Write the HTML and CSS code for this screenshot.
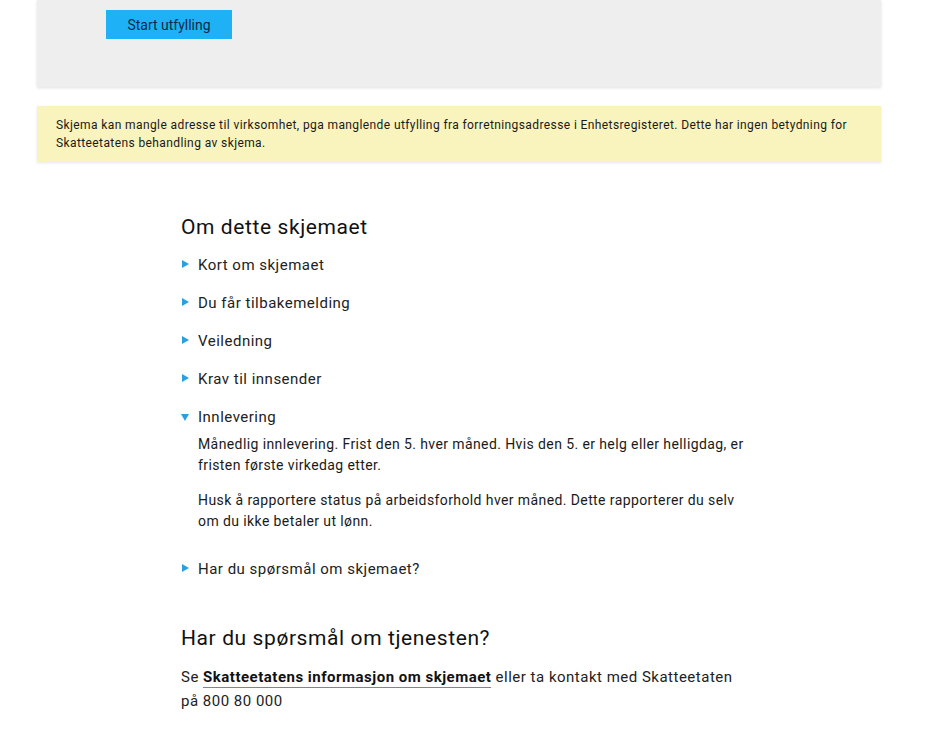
FILE: index.html
```html
<!DOCTYPE html>
<html lang="no">
<head>
<meta charset="utf-8">
<link rel="stylesheet" href="styles.css">
</head>
<body>
<div class="page">
  <div class="start-box">
    <button class="btn-start">Start utfylling</button>
  </div>
  <div class="notice">
    Skjema kan mangle adresse til virksomhet, pga manglende utfylling fra forretningsadresse i Enhetsregisteret. Dette har ingen betydning for Skatteetatens behandling av skjema.
  </div>
  <div class="content">
    <h2 class="heading">Om dette skjemaet</h2>
    <ul class="accordion">
      <li class="acc-item"><span class="tri"></span><span class="acc-title">Kort om skjemaet</span></li>
      <li class="acc-item"><span class="tri"></span><span class="acc-title">Du får tilbakemelding</span></li>
      <li class="acc-item"><span class="tri"></span><span class="acc-title">Veiledning</span></li>
      <li class="acc-item"><span class="tri"></span><span class="acc-title">Krav til innsender</span></li>
      <li class="acc-item open"><span class="tri down"></span><span class="acc-title">Innlevering</span>
        <div class="acc-body">
          <p>Månedlig innlevering. Frist den 5. hver måned. Hvis den 5. er helg eller helligdag, er fristen første virkedag etter.</p>
          <p>Husk å rapportere status på arbeidsforhold hver måned. Dette rapporterer du selv om du ikke betaler ut lønn.</p>
        </div>
      </li>
      <li class="acc-item"><span class="tri"></span><span class="acc-title">Har du spørsmål om skjemaet?</span></li>
    </ul>
    <h2 class="heading second">Har du spørsmål om tjenesten?</h2>
    <p class="contact">Se <a class="link" href="#">Skatteetatens informasjon om skjemaet</a> eller ta kontakt med Skatteetaten på 800 80 000</p>
  </div>
</div>
</body>
</html>
```
FILE: styles.css
```css
* { box-sizing: border-box; }
html, body { margin: 0; padding: 0; background: #fff; }
body {
  font-family: Roboto, "Liberation Sans", sans-serif;
  color: #1a1a1a;
}
.page {
  width: 844px;
  margin-left: 37px;
}
.start-box {
  background: #eeeeee;
  height: 87px;
  padding: 10px 0 0 69px;
  box-shadow: 0 1px 3px rgba(0,0,0,0.12);
}
.btn-start {
  display: block;
  width: 126px;
  height: 29px;
  background: #1eb1f6;
  border: none;
  font-family: Roboto, "Liberation Sans", sans-serif;
  font-size: 14px;
  color: #0f2a4a;
  padding: 0;
}
.notice {
  margin-top: 19px;
  background: #f9f3bd;
  padding: 10px 19px 10px 19px;
  font-size: 12px;
  letter-spacing: 0.4px;
  line-height: 18px;
  color: #1a1a1a;
  box-shadow: 0 1px 3px rgba(0,0,0,0.1);
}
.content {
  margin-left: 144px;
  width: 570px;
}
.heading {
  font-weight: 400;
  font-size: 21px;
  letter-spacing: 0.6px;
  margin: 51px 0 0 0;
  line-height: 28px;
  color: #111;
}
.heading.second { margin-top: 44px; }
.accordion {
  list-style: none;
  margin: 13px 0 0 0;
  padding: 0;
}
.acc-item {
  position: relative;
  padding-left: 17px;
  margin-bottom: 16px;
  font-size: 15px;
  letter-spacing: 0.5px;
  line-height: 22px;
}
.tri {
  position: absolute;
  left: 1px;
  top: 6px;
  width: 0; height: 0;
  border-top: 4px solid transparent;
  border-bottom: 4px solid transparent;
  border-left: 7px solid #2b9fe0;
}
.tri.down {
  top: 8px;
  left: 0;
  border-left: 4px solid transparent;
  border-right: 4px solid transparent;
  border-top: 7px solid #2b9fe0;
  border-bottom: none;
}
.acc-title { color: #222; }
.acc-body {
  padding-top: 6px;
  padding-bottom: 10px;
  font-size: 14px;
  letter-spacing: 0.4px;
  line-height: 21px;
  width: 550px;
}
.acc-body p { margin: 0 0 14px 0; }
.acc-body p:last-child { margin-bottom: 0; }
.contact {
  margin: 13px 0 0 0;
  width: 555px;
  font-size: 15px;
  letter-spacing: 0.5px;
  line-height: 24px;
  color: #222;
}
.link {
  color: #111;
  font-weight: 700;
  text-decoration: none;
  padding-bottom: 1px;
  border-bottom: 1px solid #2b9fe0;
}
```
